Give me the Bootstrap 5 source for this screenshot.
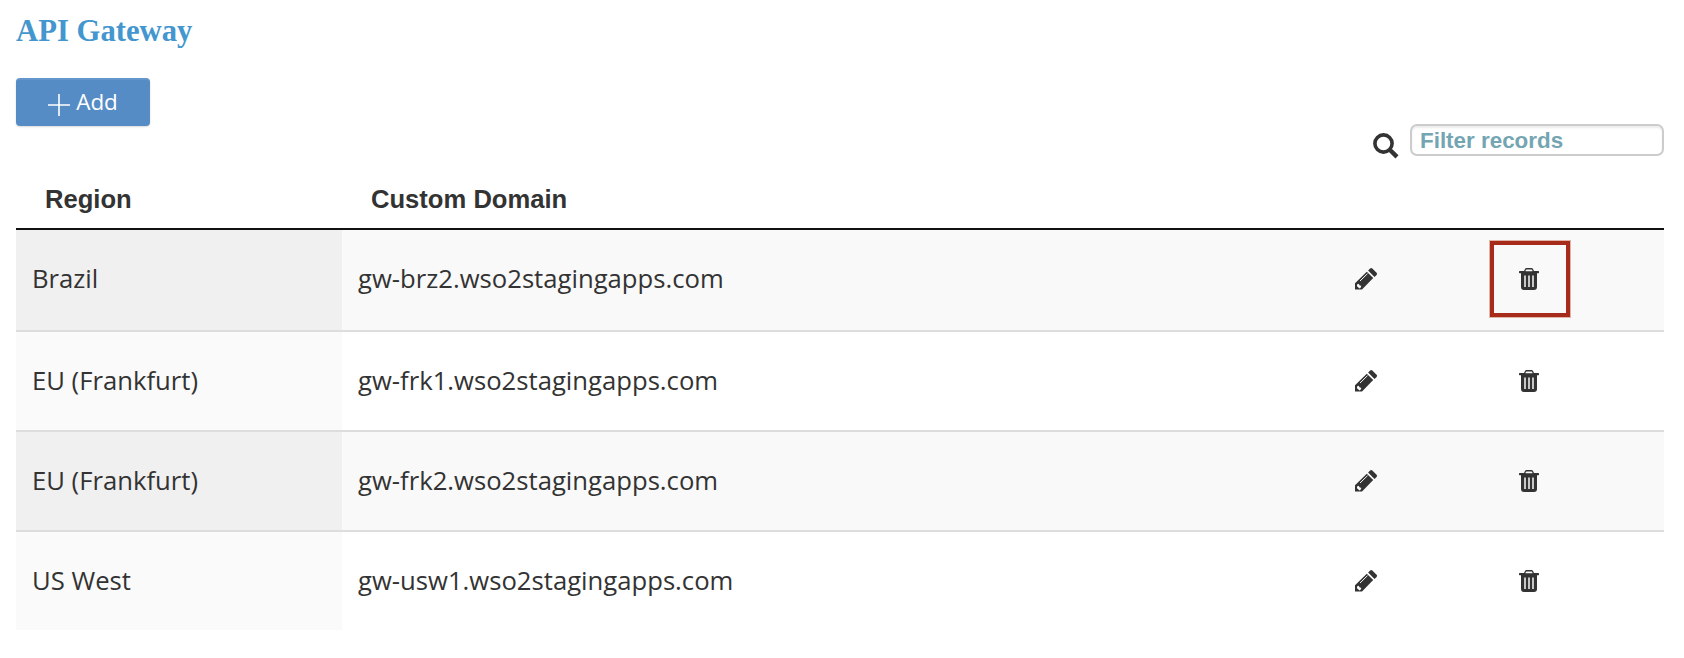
<!DOCTYPE html>
<html lang="en">
<head>
<meta charset="utf-8">
<title>API Gateway</title>
<link rel="stylesheet" href="https://cdn.jsdelivr.net/npm/bootstrap@5.3.0/dist/css/bootstrap.min.css">
<style>
body{font-family:"Open Sans","Noto Sans",sans-serif;font-size:25.67px;color:#333;background:#fff;overflow:hidden}
.page{width:1680px}
.page-head{font:bold 30.7px/36px "Liberation Serif",serif;color:#4496cf;padding-top:13px;margin-bottom:29px}
.btn-add{width:134px;height:48px;font-size:22.4px;line-height:30px;color:#fff;background:#558cc6;border:0;border-top:2px solid #6496cb;border-radius:4px;box-shadow:0 1px 2px rgba(0,0,0,.15);padding:0;gap:6px}
.btn-add:hover{background:#4a7fb8;color:#fff}
.btn-add span{padding-bottom:2px}
.btn-add svg{margin-top:3px}
.filter-bar{gap:11px;margin-top:-2px;height:32px}
.filter-bar svg{margin-top:9px}
.filter-input{width:254px;height:32px;padding:2px 8px 0;font:bold 22.4px/26px "Liberation Sans",sans-serif;border:2px solid #ccc;border-radius:7px;box-shadow:inset 0 2px 2px rgba(0,0,0,.075)}
.filter-input::placeholder{color:#74a5b2;opacity:1}
.gateways{table-layout:fixed;--bs-table-color:#333;color:#333;margin-top:14px;border-collapse:separate;border-spacing:0}
.gateways th{height:60px;padding:0 0 0 29px;font:bold 25.6px/30px "Liberation Sans",sans-serif;border-bottom:2px solid #111;color:#333;vertical-align:middle}
.gateways td{height:100px;padding:0 16px;line-height:36px;border-bottom:2px solid #ddd;box-shadow:none;color:#333}
.gateways tbody tr:first-child td{height:102px;padding-bottom:2px}
.gateways tbody tr:last-child td{height:98px;border-bottom:0}
.gateways tbody tr:nth-child(odd) td{background:#f9f9f9}
.gateways tbody tr:nth-child(odd) td:first-child{background:#f0f0f0}
.gateways tbody tr:nth-child(even) td:first-child{background:#fafafa}
.gateways svg{display:block}
.gateways .icon-cell{padding-left:29px;padding-right:0}
.marked{width:82px;height:78px;margin:0 0 0 -30px;padding-right:2px;border:5px solid #a62b1a;outline:1px solid #dfb5a8;outline-offset:-1px}
</style>
</head>
<body>
<svg class="d-none">
<symbol id="pencil" viewBox="0 0 24 24"><path d="M1 16.200 12.800 4.700l6.400 6.400L8 22.500H1z" fill="#333"/><path d="m14.100 3.500 2-2q1.100-1.100 2.200 0l4.300 4.300q1 1.100 0 2.200l-2.100 2z" fill="#333"/><path d="m6 14 7.500-7.300" stroke="#f9f9f9" stroke-width="1" fill="none"/><path d="m3 17.400 1.600-.7 1 1.600 1.700.8-.7 1.600-1.100.7L3 19.300z" fill="#f9f9f9"/></symbol>
<symbol id="trash" viewBox="0 0 20 23"><path d="M0 4.600V3.600q0-.5.6-.5H5L6 1Q6.500 0 7.500 0h5q1 0 1.500 1l1 2.100h4.400q.6 0 .6.5v1q0 .6-.6.6H18V19q0 3-3 3H5q-3 0-3-3V5.200H.6Q0 5.200 0 4.600z" fill="#333"/><path d="M6.500 3.300q0-1.800 1-1.800h5q1 0 1 1.800z" fill="#f9f9f9"/><path d="M6 7.500v11.500M10 7.500v11.500M14 7.500v11.500" stroke="#f9f9f9" stroke-width="1.500"/></symbol>
</svg>
<main class="page px-3">
<h1 class="page-head">API Gateway</h1>
<button type="button" class="btn btn-add d-flex align-items-center justify-content-center"><svg width="22" height="22" viewBox="0 0 22 22"><path d="M0 11h22M11 0v22" stroke="#fff" stroke-width="1.600"/></svg><span>Add</span></button>
<div class="filter-bar d-flex justify-content-end">
<svg width="26" height="26" viewBox="0 0 26 26" fill="none" stroke="#333"><circle cx="10.500" cy="10.500" r="8.600" stroke-width="3.600"/><path d="m16.500 16.500 7.500 7.300" stroke-width="4.400"/></svg>
<input type="text" class="form-control filter-input" placeholder="Filter records" aria-label="Filter records">
</div>
<table class="table gateways align-middle mb-0">
<colgroup><col style="width:326px"><col style="width:983px"><col style="width:165px"><col></colgroup>
<thead><tr><th>Region</th><th>Custom Domain</th><th></th><th></th></tr></thead>
<tbody>
<tr><td>Brazil</td><td>gw-brz2.wso2stagingapps.com</td><td class="icon-cell"><svg width="24" height="24"><use href="#pencil"/></svg></td><td class="icon-cell"><div class="marked d-flex align-items-center justify-content-center"><svg width="20" height="23"><use href="#trash"/></svg></div></td></tr>
<tr><td>EU (Frankfurt)</td><td>gw-frk1.wso2stagingapps.com</td><td class="icon-cell"><svg width="24" height="24"><use href="#pencil"/></svg></td><td class="icon-cell"><svg width="20" height="23"><use href="#trash"/></svg></td></tr>
<tr><td>EU (Frankfurt)</td><td>gw-frk2.wso2stagingapps.com</td><td class="icon-cell"><svg width="24" height="24"><use href="#pencil"/></svg></td><td class="icon-cell"><svg width="20" height="23"><use href="#trash"/></svg></td></tr>
<tr><td>US West</td><td>gw-usw1.wso2stagingapps.com</td><td class="icon-cell"><svg width="24" height="24"><use href="#pencil"/></svg></td><td class="icon-cell"><svg width="20" height="23"><use href="#trash"/></svg></td></tr>
</tbody>
</table>
</main>
<script src="https://cdn.jsdelivr.net/npm/bootstrap@5.3.0/dist/js/bootstrap.bundle.min.js"></script>
</body>
</html>
